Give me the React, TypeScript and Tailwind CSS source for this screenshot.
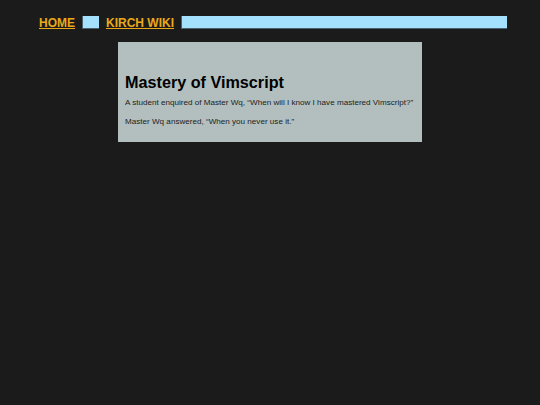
export default function App() {
  return (
    <div
      className="min-h-[405px] w-full bg-[#1b1b1b] pt-4"
      style={{ fontFamily: '"Liberation Sans", Arial, sans-serif' }}
    >
      <nav className="flex h-[13px] items-center pl-[39px] pr-[33px]">
        <a href="#" className="text-[12px] font-bold leading-none text-[#eaa919] underline">
          HOME
        </a>
        <div className="ml-[7px] h-[13px] w-[17px] border-b border-l border-[#4a6070] bg-[#a3e1ff]" />
        <a href="#" className="ml-[7px] text-[12px] font-bold leading-none text-[#eaa919] underline">
          KIRCH WIKI
        </a>
        <div className="ml-[7px] h-[13px] flex-1 border-b border-l border-[#4a6070] bg-[#a3e1ff]" />
      </nav>
      <main className="ml-[118px] mt-[13px] w-[304px] bg-[#b2bfbe] px-[7px] pb-[15px] pt-[30px] text-black">
        <h1 className="text-[16.2px] font-bold leading-[20px]">Mastery of Vimscript</h1>
        <p className="mt-[6px] text-[8.1px] leading-[10px] text-[#222]">
          A student enquired of Master Wq, “When will I know I have mastered Vimscript?”
        </p>
        <p className="mt-[9px] text-[8.1px] leading-[10px] text-[#222]">
          Master Wq answered, “When you never use it.”
        </p>
      </main>
    </div>
  );
}
